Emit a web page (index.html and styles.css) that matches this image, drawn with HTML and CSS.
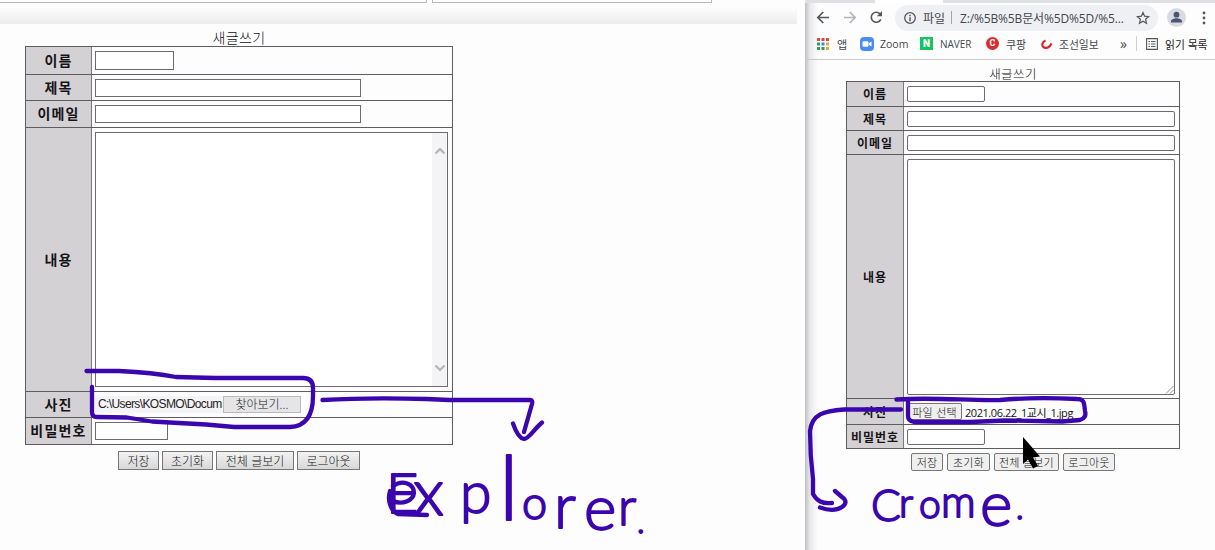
FILE: index.html
```html
<!DOCTYPE html>
<html lang="ko">
<head>
<meta charset="utf-8">
<title>새글쓰기</title>
<link rel="stylesheet" href="styles.css">
</head>
<body>
<main class="screen">
  <section class="explorer">
    <div class="tabs"><i class="tab-a"></i><i class="tab-b"></i></div>
    <div class="band"></div>
    <div class="form form-ie">
      <h1 class="caption">새글쓰기</h1>
      <div class="table">
        <div class="row r1"><div class="th">이름</div><div class="td"><span class="input short"></span></div></div>
        <div class="row r2"><div class="th">제목</div><div class="td"><span class="input long"></span></div></div>
        <div class="row r3"><div class="th">이메일</div><div class="td"><span class="input long"></span></div></div>
        <div class="row r4"><div class="th">내용</div><div class="td"><div class="area"><div class="scroll">
          <svg width="12" height="8" viewBox="0 0 12 8"><path d="M1.5 6.5 6 2l4.500 4.500"/></svg>
          <svg width="12" height="8" viewBox="0 0 12 8"><path d="M1.500 1.500 6 6l4.500-4.500"/></svg>
        </div></div></div></div>
        <div class="row r5"><div class="th">사진</div><div class="td"><span class="path">C:\Users\KOSMO\Docum</span><span class="browse">찾아보기...</span></div></div>
        <div class="row r6"><div class="th">비밀번호</div><div class="td"><span class="input pass"></span></div></div>
      </div>
      <div class="buttons"><span class="btn b1">저장</span><span class="btn b2">초기화</span><span class="btn b3">전체 글보기</span><span class="btn b4">로그아웃</span></div>
    </div>
  </section>

  <section class="chrome">
    <div class="strip"><i></i></div>
    <div class="toolbar">
      <svg class="nav" width="70" height="20" viewBox="0 0 70 20"><g fill="none" stroke-width="1.700"><path stroke="#55575b" d="M13 9.500H2M7.300 4 1.800 9.500l5.500 5.500"/><path stroke="#b4b5b8" d="M28 9.500h11M33.700 4l5.500 5.500-5.500 5.500"/><path stroke="#55575b" d="M64.300 6.300a5 5 0 1 0 .5 5"/></g><path fill="#55575b" d="M66 3v5.200h-5.200z"/></svg>
      <div class="omnibox">
        <svg width="14" height="14" viewBox="0 0 14 14"><circle cx="7" cy="7" r="5.300" fill="none" stroke="#55575b" stroke-width="1.300"/><path stroke="#55575b" stroke-width="1.500" d="M7 6.200v4M7 3.700v1.500"/></svg>
        <span class="scheme">파일</span><i class="sep"></i><span class="url">Z:/%5B%5B문서%5D%5D/%5...</span>
        <svg class="star" width="14" height="14" viewBox="0 0 14 14"><path fill="none" stroke="#55575b" stroke-width="1.200" d="m7 1.500 1.600 3.700 4 .4-3 2.700.9 4L7 10.200l-3.500 2.100.9-4-3-2.700 4-.4z"/></svg>
      </div>
      <svg class="avatar" width="19" height="19" viewBox="0 0 19 19"><circle cx="9.500" cy="9.500" r="9.500" fill="#d9dbe2"/><circle cx="9.500" cy="6.700" r="2.900" fill="#4c5470"/><path fill="#4c5470" d="M4 14.500v-1.200c0-2 3.500-3 5.500-3s5.500 1 5.500 3v1.200z"/></svg>
      <svg class="dots" width="4" height="14" viewBox="0 0 4 14" fill="#55575b"><circle cx="2" cy="2" r="1.400"/><circle cx="2" cy="7" r="1.400"/><circle cx="2" cy="12" r="1.400"/></svg>
    </div>
    <div class="bookmarks">
      <svg class="apps" width="12" height="12" viewBox="0 0 12 12"><path fill="#dc4b42" d="M0 0h3v3H0zM4.500 0h3v3h-3zM9 0h3v3H9z"/><path fill="#2e9a5b" d="M0 4.500h3v3H0zM0 9h3v3H0zM4.500 9h3v3h-3z"/><path fill="#4284df" d="M4.500 4.500h3v3h-3z"/><path fill="#e7a832" d="M9 4.500h3v3H9zM9 9h3v3H9z"/></svg>
      <span class="bm bm-app">앱</span>
      <svg class="ic-zoom" width="14" height="14" viewBox="0 0 14 14"><rect width="14" height="14" rx="4" fill="#4a8cf0"/><rect x="2.500" y="4.300" width="6" height="5.400" rx="1.200" fill="#fff"/><path fill="#fff" d="m9 6.300 2.500-1.800v5L9 7.800z"/></svg>
      <span class="bm bm-zoom">Zoom</span>
      <span class="ic-naver">N</span>
      <span class="bm bm-naver">NAVER</span>
      <span class="ic-coupang">C</span>
      <span class="bm bm-coupang">쿠팡</span>
      <svg class="ic-chosun" width="12" height="12" viewBox="0 0 12 12"><path fill="none" stroke="#d8232f" stroke-width="2.200" d="M4.500 2.500C1 4 .5 7.500 2.500 9.300c2.500 1.600 6.500 0 8-4"/></svg>
      <span class="bm bm-chosun">조선일보</span>
      <span class="more">»</span><i class="vline"></i>
      <svg class="ic-list" width="12" height="12" viewBox="0 0 12 12"><path fill="none" stroke="#55575b" stroke-width="1.100" d="M.6.6h10.800v10.800H.6zM2.500 3.500H4M5 3.500h4.500M2.500 6H4M5 6h4.500M2.500 8.500H4M5 8.500h4.500"/></svg>
      <span class="bm bm-list">읽기 목록</span>
    </div>
    <div class="form form-cr">
      <h1 class="caption">새글쓰기</h1>
      <div class="table">
        <div class="row r1"><div class="th">이름</div><div class="td"><span class="input short"></span></div></div>
        <div class="row r2"><div class="th">제목</div><div class="td"><span class="input long"></span></div></div>
        <div class="row r3"><div class="th">이메일</div><div class="td"><span class="input long"></span></div></div>
        <div class="row r4"><div class="th">내용</div><div class="td"><div class="area"><svg width="9" height="9" viewBox="0 0 9 9"><path stroke="#777" stroke-width=".8" d="M1 8.500 8.500 1M5 8.500 8.500 5"/></svg></div></div></div>
        <div class="row r5"><div class="th">사진</div><div class="td"><span class="btn pick">파일 선택</span><span class="file">2021.06.22_1교시_1.jpg</span></div></div>
        <div class="row r6"><div class="th">비밀번호</div><div class="td"><span class="input short"></span></div></div>
      </div>
      <div class="buttons"><span class="btn b1">저장</span><span class="btn b2">초기화</span><span class="btn b3">전체 글보기</span><span class="btn b4">로그아웃</span></div>
    </div>
  </section>

  <svg class="ink" width="1215" height="550" viewBox="0 0 1215 550">
    <path d="M86.500 371H119C143 372 161 374 176 377L215 378H303Q313 378 313 388V396Q313 426 290 427H234L206 424.500 152 421.500 127 417.500 97 417Q92 417 92 412V387"/>
    <path d="M322.500 400C356 398 392 398 427 399L449 400H530Q533 400 532 404L524 432M513 423.500Q518 438 524 439C529 439 534 429 542 422.500"/>
    <path d="M896.500 399.500C936 397 970 401 1000 400C1032 397 1056 398 1077 399C1085 399 1084 404 1085 411Q1087 418 1080 420L1062 421.500 1005 420.500 970 422H914Q908 421 908 416V401"/>
    <path d="M901 409.500H844C824 411 812 414 810 431C810 448 811 463 813 479V494C817 501 822 504 832 503M835 491L842 497Q849 502 842 507C836 511 827 510 820 507.500"/>
    <path class="scribble" d="M393 486C403 479 414 484 414 493C413 501 402 505 393 501M390 491C387 501 391 511 398 514L427 515"/>
    <text class="hand"><tspan x="386" y="513" font-size="56">E</tspan><tspan x="413" y="515" font-size="66">x</tspan><tspan x="460" y="513" font-size="57">p</tspan><tspan x="499" y="520" font-size="89">l</tspan><tspan x="522" y="519" font-size="45">o</tspan><tspan x="554" y="528" font-size="62">r</tspan><tspan x="584" y="530" font-size="62">e</tspan><tspan x="618" y="525" font-size="52">r</tspan><tspan x="637" y="533" font-size="32">.</tspan></text>
    <text class="hand"><tspan x="871" y="521" font-size="44">C</tspan><tspan x="899" y="517" font-size="40">r</tspan><tspan x="919" y="518" font-size="39">o</tspan><tspan x="941" y="517" font-size="43">m</tspan><tspan x="980" y="526" font-size="62">e</tspan><tspan x="1016" y="519" font-size="32">.</tspan></text>
    <path class="cursor" d="M1023 437v27l5-4.500 5 9 5-2.500-5-8.500 7-1z"/>
  </svg>
</main>
</body>
</html>
```
FILE: styles.css
```css
* { box-sizing: border-box; }
body { margin: 0; font-family: "Liberation Sans", "Noto Sans CJK KR", sans-serif; color: #222; }
.screen { position: relative; display: flex; width: 1215px; height: 550px; overflow: hidden; background: #fdfdfe; }
svg { display: block; flex: none; }
span, i { flex: none; }
.explorer { width: 805px; flex: none; }
.tabs { display: flex; gap: 5px; height: 3px; }
.tabs i { border: 1px solid #b9b9b9; border-top: 0; background: #fff; }
.tab-a { width: 427px; }
.tabs .tab-a { border-left: 0; }
.tab-b { width: 280px; }
.band { width: 797px; height: 21px; background: linear-gradient(#fdfdfe 20%, #ececec); }

.caption { margin: 0; text-align: center; font: 300 14px/16px "Noto Sans CJK KR", sans-serif; letter-spacing: .4px; color: #111; }
.table { border: 1px solid #5e5c60; border-bottom: 0; }
.row { display: flex; border-bottom: 1px solid #5e5c60; }
.th { display: flex; flex: none; align-items: center; justify-content: center; padding-bottom: 2px; background: #d4d1d5; border-right: 1px solid #7c797e; font-family: "Noto Sans CJK KR", sans-serif; font-weight: 700; white-space: nowrap; color: #161418; }
.td { display: flex; flex: 1; align-items: center; padding-left: 3px; }
.input, .area { display: block; background: #fff; border: 1px solid #6d6b6f; }
.buttons { display: flex; }
.btn { display: flex; align-items: center; justify-content: center; font-family: "Noto Sans CJK KR", sans-serif; font-weight: 300; white-space: nowrap; border: 1px solid #777; background: #efefef; color: #111; }

.form-ie { width: 428px; margin: 6px 0 0 25px; }
.form-ie .caption { line-height: 15px; padding-bottom: 1px; }
.form-ie .th { width: 66px; font-size: 14px; letter-spacing: 1.200px; }
.form-ie .r1 { height: 28px; }
.form-ie .r2 { height: 26px; }
.form-ie .r3 { height: 27px; }
.form-ie .r4 { height: 264px; }
.form-ie .r5 { height: 26px; }
.form-ie .r6 { height: 27px; }
.form-ie .input { height: 18px; }
.form-ie .short { width: 79px; height: 19px; }
.form-ie .long { width: 266px; }
.form-ie .pass { width: 73px; }
.form-ie .area { display: flex; justify-content: flex-end; width: 353px; height: 255px; }
.scroll { display: flex; flex-direction: column; justify-content: space-between; align-items: center; width: 15px; padding: 14px 0; background: #f4f3f6; }
.scroll path { fill: none; stroke: #b5b4b7; stroke-width: 2.200; }
.path { width: 128px; height: 17px; padding-left: 3px; font-size: 12px; line-height: 17px; letter-spacing: -.62px; white-space: nowrap; background: #f4f3f5; }
.browse { width: 78px; height: 17px; border: 1px solid #bbb; background: #e5e4e6; font: 300 12px/14px "Noto Sans CJK KR", sans-serif; text-align: center; }
.form-ie .buttons { gap: 3px; padding: 6px 0 0 93px; }
.form-ie .btn { height: 19px; font-size: 12px; background: linear-gradient(#f2f2f2, #d8d8d8); }
.form-ie .b1 { width: 41px; }
.form-ie .b2 { width: 51px; }
.form-ie .b3 { width: 78px; }
.form-ie .b4 { width: 63px; }

.chrome { width: 410px; flex: none; background: linear-gradient(90deg, #bfbfc3 0, #e9e9ec 5px, #fdfdfe 13px); }
.strip { height: 3px; padding-left: 70px; background: #dee0e5; }
.strip i { display: block; width: 68px; height: 3px; background: #fff; }
.toolbar { display: flex; align-items: center; height: 29px; padding-left: 11px; }
.omnibox { display: flex; align-items: center; width: 263px; height: 26px; margin-left: 9px; padding-left: 8px; border-radius: 13px; background: #eff0f4; font: 12px "Open Sans", "Noto Sans CJK KR", sans-serif; color: #45474b; }
.scheme { width: 23px; margin-left: 6px; white-space: nowrap; }
.sep { width: 1px; height: 13px; margin: 0 8px 0 5px; background: #a4a5a9; }
.url { width: 163px; white-space: nowrap; font-size: 12px; letter-spacing: -.15px; }
.star { margin-left: 13px; }
.avatar { margin-left: 9px; }
.dots { margin-left: 16px; }
.bookmarks { display: flex; align-items: center; height: 28px; padding: 0 0 4px 12px; border-bottom: 1px solid #c9c9cc; font: 11px "Open Sans", "Noto Sans CJK KR", sans-serif; color: #45474b; }
.bm { white-space: nowrap; }
.bm-app { width: 11px; margin: 0 12px 0 8px; }
.bm-zoom { width: 27px; margin: 0 13px 0 6px; font-size: 10.500px; }
.ic-naver { width: 13px; height: 13px; background: #13c561; color: #fff; font: 900 10px/13px "Roboto", sans-serif; text-align: center; }
.bm-naver { width: 33px; margin: 0 13px 0 7px; font-size: 10px; }
.ic-coupang { width: 13px; height: 13px; border-radius: 50%; background: #d62c30; color: #fff; font: 700 9px/13px "Roboto", sans-serif; text-align: center; }
.bm-coupang { width: 21px; margin: 0 14px 0 7px; }
.bm-chosun { width: 40px; margin: 0 21px 0 6px; font-size: 10.800px; }
.more { width: 9px; font-size: 14px; line-height: 14px; }
.vline { width: 1px; height: 15px; margin: 0 9px 0 7px; background: #d0d0d4; }
.bm-list { margin-left: 7px; font-size: 10.800px; color: #222; }

.form-cr { width: 334px; margin: 6px 0 0 41px; }
.form-cr .caption { font-size: 12.500px; line-height: 15px; }
.form-cr .th { width: 57px; font-size: 12px; letter-spacing: .9px; padding-bottom: 1px; }
.form-cr .r1, .form-cr .r2, .form-cr .r3, .form-cr .r6 { height: 24px; }
.form-cr .r1 { height: 25px; }
.form-cr .r4 { height: 244px; }
.form-cr .r5 { height: 26px; }
.form-cr .input { height: 16px; border-radius: 2px; }
.form-cr .short { width: 78px; }
.form-cr .long { width: 268px; }
.form-cr .area { display: flex; justify-content: flex-end; align-items: flex-end; width: 268px; height: 236px; border-radius: 2px; }
.form-cr .btn { height: 18px; border-radius: 2px; font-size: 11px; letter-spacing: .2px; }
.form-cr .pick { width: 55px; height: 17px; }
.file { margin-left: 3px; font: 11px "Open Sans", "Noto Sans CJK KR", sans-serif; letter-spacing: -.45px; white-space: nowrap; color: #111; }
.form-cr .buttons { gap: 4px; padding: 4px 0 0 65px; }
.form-cr .b1 { width: 32px; }
.form-cr .b2 { width: 43px; }
.form-cr .b3 { width: 65px; }
.form-cr .b4 { width: 52px; }

/* pen annotations sit over both windows */
.ink { position: absolute; left: 0; top: 0; fill: none; stroke: #3b06ad; stroke-width: 4.300; stroke-linecap: round; stroke-linejoin: round; }
.hand { font-family: Lato, sans-serif; font-weight: 300; fill: #3b06ad; stroke-width: 1.800; }
.cursor { fill: #000; stroke: none; }
```
